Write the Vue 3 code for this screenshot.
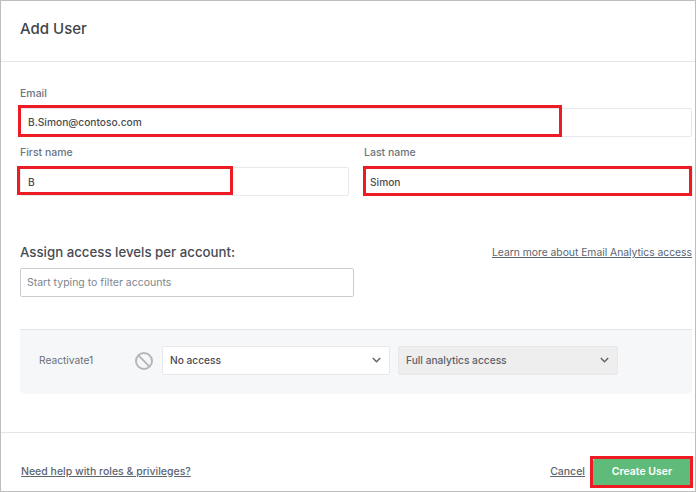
<script setup>
const accounts = [{ name: 'Reactivate1', access: 'No access', analytics: 'Full analytics access' }]
</script>

<template>
  <div class="dialog">
    <header class="head">
      <h1>Add User</h1>
    </header>

    <section class="form">
      <div class="field">
        <label>Email</label>
        <div class="input-wrap">
          <div class="input">B.Simon@contoso.com</div>
          <span class="mark mark-email"></span>
        </div>
      </div>
      <div class="name-row">
        <div class="field">
          <label>First name</label>
          <div class="input-wrap">
            <div class="input input-name">B</div>
            <span class="mark mark-first"></span>
          </div>
        </div>
        <div class="field">
          <label>Last name</label>
          <div class="input-wrap">
            <div class="input input-name input-last">Simon</div>
            <span class="mark mark-last"></span>
          </div>
        </div>
      </div>
    </section>

    <section class="access">
      <div class="access-head">
        <h2>Assign access levels per account:</h2>
        <a class="learn">Learn more about Email Analytics access</a>
      </div>
      <div class="filter">Start typing to filter accounts</div>
    </section>

    <section class="panel">
      <div v-for="a in accounts" :key="a.name" class="account">
        <span class="account-name">{{ a.name }}</span>
        <svg class="ban" width="20" height="20" viewBox="0 0 20 20" fill="none" stroke="#b4b6b8" stroke-width="2">
          <circle cx="10" cy="10" r="8" />
          <path d="M4.4 4.4l11.2 11.2" />
        </svg>
        <div class="select select-access">
          <span>{{ a.access }}</span>
          <svg width="9" height="6" viewBox="0 0 9 6" fill="none" stroke="#5d6670" stroke-width="1.5"><path d="M.8 1l3.7 3.7L8.2 1" /></svg>
        </div>
        <div class="select select-analytics">
          <span>{{ a.analytics }}</span>
          <svg width="9" height="6" viewBox="0 0 9 6" fill="none" stroke="#5d6670" stroke-width="1.5"><path d="M.8 1l3.7 3.7L8.2 1" /></svg>
        </div>
      </div>
    </section>

    <footer class="foot">
      <a class="help">Need help with roles &amp; privileges?</a>
      <div class="actions">
        <a class="cancel">Cancel</a>
        <div class="btn-wrap">
          <button class="create">Create User</button>
          <span class="mark mark-btn"></span>
        </div>
      </div>
    </footer>
  </div>
</template>

<style>
html, body {
  margin: 0;
  background: #fff;
}
</style>

<style scoped>
.dialog {
  box-sizing: border-box;
  width: 696px;
  height: 492px;
  border: 1px solid #bdbdbd;
  background: #fff;
  font-family: Inter, "Liberation Sans", sans-serif;
  color: #484c52;
  overflow: hidden;
}

.head {
  box-sizing: border-box;
  height: 61px;
  padding: 18px 19px 0;
  border-bottom: 1px solid #e3e5e9;
}

h1 {
  margin: 0;
  font-size: 15px;
  line-height: 20px;
  font-weight: 500;
  color: #3f444b;
}

.form {
  padding: 25px 3px 0 19px;
}

label {
  display: block;
  height: 21px;
  font-size: 10.5px;
  line-height: 14px;
  font-weight: 500;
  color: #6b7480;
}

.field + .name-row {
  margin-top: 9px;
}

.name-row {
  display: grid;
  grid-template-columns: 329px 329px;
  column-gap: 15px;
}

.input-wrap {
  position: relative;
}

.input {
  box-sizing: border-box;
  height: 29px;
  padding: 0 7px;
  border: 1px solid #e6e8ec;
  border-radius: 2px;
  font-size: 10.2px;
  line-height: 27px;
  font-weight: 500;
  color: #484c52;
}

.input-name {
  line-height: 29px;
}

.input-last {
  padding-left: 5px;
}

.mark {
  position: absolute;
  box-sizing: border-box;
  border: 3px solid #ed1c24;
}

.mark-email {
  left: -2px;
  top: -3px;
  width: 544px;
  height: 32px;
}

.mark-first {
  left: -3px;
  top: -1px;
  width: 216px;
  height: 29px;
}

.mark-last {
  left: -1px;
  top: -1px;
  width: 329px;
  height: 30px;
}

.access {
  padding: 0 3px 0 19px;
}

.access-head {
  display: flex;
  justify-content: space-between;
  align-items: center;
  margin-top: 46px;
  height: 20px;
}

h2 {
  margin: 0;
  font-size: 13.25px;
  font-weight: 500;
  color: #484c52;
}

.learn {
  font-size: 10.3px;
  color: #5c6570;
  text-decoration: underline;
}

.filter {
  box-sizing: border-box;
  width: 334px;
  height: 29px;
  margin-top: 6px;
  padding: 0 6px;
  border: 1px solid #c9ccd1;
  border-radius: 2px;
  font-size: 10.5px;
  line-height: 27px;
  color: #7d848c;
}

.panel {
  box-sizing: border-box;
  height: 65px;
  margin: 32px 3px 0 19px;
  border-top: 1px solid #e3e5e9;
  border-radius: 0 0 5px 5px;
  background: #f6f7f9;
}

.account {
  display: flex;
  align-items: center;
  height: 61px;
  padding-left: 19px;
}

.account-name {
  width: 95px;
  padding-bottom: 2px;
  font-size: 10.2px;
  color: #6a6f75;
}

.ban {
  margin-right: 8px;
}

.select {
  box-sizing: border-box;
  display: flex;
  justify-content: space-between;
  align-items: center;
  height: 29px;
  padding: 0 8px 2px 7px;
  border: 1px solid #e6e8ec;
  border-radius: 2px;
  font-size: 10.2px;
  font-weight: 500;
}

.select-access {
  width: 228px;
  background: #fff;
  color: #484c52;
}

.select-analytics {
  width: 220px;
  margin-left: 8px;
  background: #eeeeee;
  color: #5c6168;
}

.foot {
  display: flex;
  justify-content: space-between;
  align-items: center;
  box-sizing: border-box;
  height: 59px;
  margin-top: 38px;
  padding: 20px 4px 0 20px;
  border-top: 1px solid #e3e5e9;
  font-size: 10.5px;
  font-weight: 500;
  color: #5c6570;
}

.help, .cancel {
  padding-bottom: 2px;
  text-decoration: underline;
}

.actions {
  display: flex;
  align-items: center;
  gap: 8px;
}

.btn-wrap {
  position: relative;
  display: flex;
}

.create {
  width: 98px;
  height: 27px;
  padding: 0 0 2px;
  border: 0;
  border-radius: 2px;
  background: #5fbb7a;
  color: #fff;
  font: inherit;
  font-weight: 600;
}

.mark-btn {
  left: -3px;
  top: -3px;
  width: 103px;
  height: 32px;
}
</style>
